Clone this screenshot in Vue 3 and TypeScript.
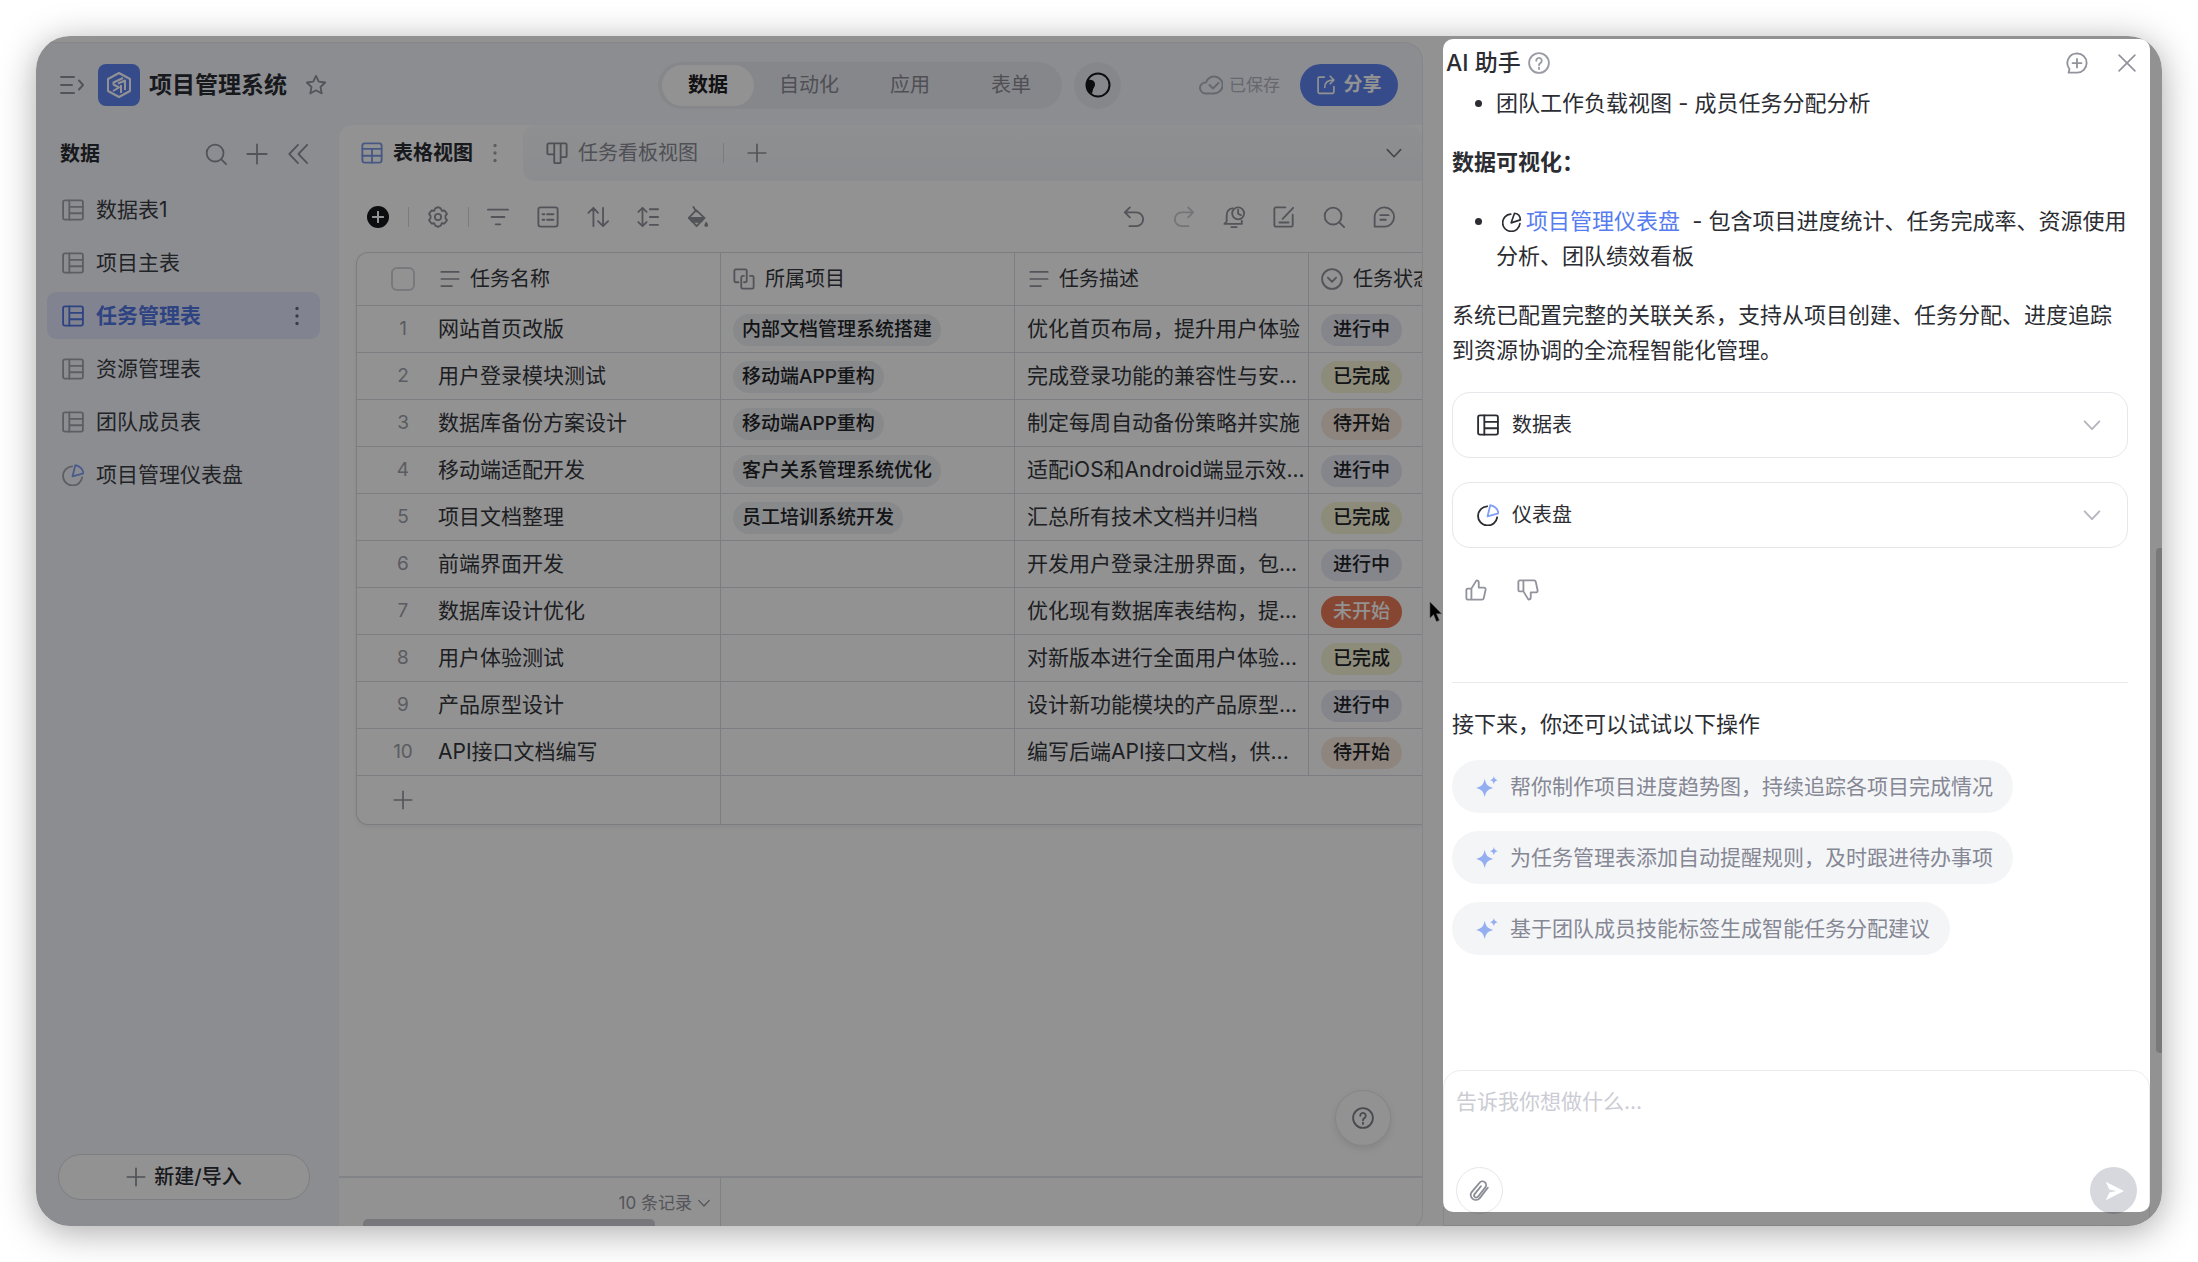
<script setup lang="ts">
import { h, type FunctionalComponent } from 'vue'

const shapes: Record<string, string> = {
  menu: '<path d="M1 4h13M1 12h11M1 20h13M19 7.500l4 4.500-4 4.500"/>',
  star: '<path d="M12 2l3 6.400 7 .9-5.100 4.900 1.300 7L12 17.800l-6.200 3.400 1.300-7L2 9.300l7-.9z"/>',
  search: '<circle cx="11" cy="11" r="9.200"/><path d="M17.800 17.800L23 23"/>',
  plus: '<path d="M12 1.500v21M1.500 12h21"/>',
  collapse: '<path d="M12 2L2.500 12l9.500 10M22 2l-9.500 10L22 22"/>',
  sheet: '<rect x="1.200" y="1.500" width="21.600" height="21" rx="2"/><path d="M8 1.500v21M8 8.500h14.800M8 15.500h14.800"/>',
  dashboard: '<path d="M11 2.500A10.500 10.500 0 1 0 22 14.500"/><path class="accent" d="M14.500 1.200l-3 12.300 11.800-3.400C23 5.500 19 2 14.500 1.200z"/>',
  pie: '<path d="M10.500 2.500A10.400 10.400 0 1 0 21.500 14"/><path d="M15 1.500L11 13l11-3.500C22 5 19 2 15 1.500z"/>',
  dots: '<g fill="currentColor" stroke="none"><circle cx="12" cy="3" r="2"/><circle cx="12" cy="12" r="2"/><circle cx="12" cy="21" r="2"/></g>',
  grid: '<rect x="1.500" y="1.500" width="21" height="21" rx="2.500"/><path d="M1.500 7.500h21M1.500 15h21M12 7.500v15"/>',
  board: '<path d="M3 1.500h18a1.500 1.500 0 0 1 1.500 1.500v12.500a1 1 0 0 1-1 1H16V22a1 1 0 0 1-1 1H10a1 1 0 0 1-1-1v-8.500H2.500a1 1 0 0 1-1-1V3A1.500 1.500 0 0 1 3 1.500zM9 1.500v12M16 1.500v15"/>',
  down: '<path d="M4 8l8 8.500L20 8"/>',
  gear: '<path d="M12 1.200l3 1.400 1.200 2.600 2.900-.3 2.700 3.700-1.700 2.200v2.400l1.700 2.200-2.700 3.700-2.900-.3-1.200 2.600-3 1.400-3-1.400-1.200-2.600-2.900.3-2.700-3.700 1.700-2.200v-2.400L2.200 8.600l2.700-3.700 2.900.3L9 2.600z"/><circle cx="12" cy="12" r="3.400"/>',
  filter: '<path d="M1 4h22M5 12h14M9.500 20h5"/>',
  fields: '<rect x="1.500" y="1.500" width="21" height="21" rx="2.500"/><path d="M6 9h2M11 9h7M6 15h2M11 15h7"/>',
  sort: '<path d="M7 22V2M1.500 7.500L7 2l5 5.500M17.500 2v20M12 16.500l5.500 5.500 5.500-5.500"/>',
  rowHeight: '<path d="M6 2v20M1.500 6.500L6 2l4.500 4.500M1.500 17.500L6 22l4.500-4.500M14 3.500h9M14 12h9M14 20.500h9"/>',
  fill: '<path d="M7 1l3 5M10 4.500L2 13l8.500 9 8.500-9z"/><path d="M2 13h17l-4 4.200H6z" fill="currentColor"/><path d="M21 17c1.500 2 2 3 2 4a2 2 0 0 1-4 0c0-1 .5-2 2-4z" fill="currentColor" stroke="none"/>',
  undo: '<path d="M7.500 1.500L2 7l5.500 5.500M2 7h12.500a7.500 7.500 0 0 1 0 15H7"/>',
  redo: '<path d="M16.500 1.500L22 7l-5.500 5.500M22 7H9.500a7.500 7.500 0 0 0 0 15H17"/>',
  remind: '<path d="M10.500 2.500C6 3 4 6.500 4 10.500V17l-2.500 2.500h19V16M9 23h6"/><circle cx="16.500" cy="8" r="6.500"/><path d="M16.500 4v4.500l3 1.500"/>',
  form: '<path d="M13.500 1.500H3A1.500 1.500 0 0 0 1.500 3v18A1.500 1.500 0 0 0 3 22.500h17a1.500 1.500 0 0 0 1.500-1.500V9.500M22 2L10.500 14M7 18h10"/>',
  comment: '<path d="M12.500 1.500a10.300 10.300 0 1 1 0 21H1.800V12A10.500 10.500 0 0 1 12.500 1.500zM8 10h9M8 15h6"/>',
  text: '<path d="M1.500 3.500h21M1.500 12h21M1.500 20.500h13"/>',
  link: '<path d="M6 15.500H3A1.500 1.500 0 0 1 1.500 14V3A1.500 1.500 0 0 1 3 1.500h10.500A1.500 1.500 0 0 1 15 3v10.500a2 2 0 0 1-2 2h-1"/><path d="M18.500 8.500H21a1.500 1.500 0 0 1 1.500 1.500v11a1.500 1.500 0 0 1-1.500 1.500H10.500A1.500 1.500 0 0 1 9 21V10.500a2 2 0 0 1 2-2h1"/>',
  select: '<circle cx="12" cy="12" r="10.800"/><path d="M7.500 10.500l4.500 4.500 4.500-4.500"/>',
  cloud: '<path d="M6.500 20.500a5.500 5.500 0 0 1 0-11h.5a8.500 8.500 0 1 1 8 11zM10.500 12l3.500 3.500 5.500-5.500"/>',
  share: '<path d="M10 2.500H4A1.500 1.500 0 0 0 2.500 4v16.500A1.500 1.500 0 0 0 4 22h16a1.500 1.500 0 0 0 1.500-1.500V14M10.500 15c0-6 4-9 10.500-9M17 1.500L21.500 6 17 10.500"/>',
  help: '<circle cx="12" cy="12" r="10.800"/><path d="M9 9.500a3 3 0 1 1 4.500 2.600c-1 .6-1.500 1.200-1.500 2.400M12 17v1.600"/>',
  newChat: '<path d="M12 1.500a10.300 10.300 0 1 1 0 21H2.800l1-4A10.500 10.500 0 0 1 12 1.500zM12 7.500v9.500M7.200 12.200h9.600"/>',
  close: '<path d="M2.500 2.500l19 19M21.500 2.500l-19 19"/>',
  like: '<path d="M7 10.500H3A1.500 1.500 0 0 0 1.500 12v9A1.500 1.500 0 0 0 3 22.500h15.500a2 2 0 0 0 2-1.600l2-9.500a1.800 1.800 0 0 0-1.800-2H15V4c0-1.500-1-2.500-2.500-2.500L7 10.500zM7 10.500v12"/>',
  dislike: '<path d="M7 13.500H3A1.500 1.500 0 0 1 1.500 12V3A1.500 1.500 0 0 1 3 1.500h15.500a2 2 0 0 1 2 1.600l2 9.500a1.800 1.800 0 0 1-1.800 2H15V20c0 1.500-1 2.500-2.500 2.500L7 13.500zM7 13.500v-12"/>',
  spark: '<g fill="currentColor" stroke="none"><path d="M9.500 3c1.500 6.500 2.800 8 9.200 10-6.400 2-7.700 3.500-9.200 10C8 16.500 6.500 15 .3 13 6.500 11 8 9.500 9.500 3z"/><path d="M19.500 0c.7 3 1.400 3.700 4.200 4.500-2.800.8-3.500 1.500-4.200 4.500-.7-3-1.400-3.700-4.200-4.500 2.800-.8 3.500-1.500 4.200-4.500z"/></g>',
  clip: '<path d="M20.500 8.500l-9 11.500a5.500 5.500 0 0 1-8.600-6.800L11.500 3a4 4 0 0 1 6.300 5L9.500 18.500a2.300 2.300 0 0 1-3.600-2.800L13 6.800"/>',
  send: '<path fill="currentColor" stroke="none" d="M2 1l22 11L2 23l4.500-9.300L15 12 6.500 10.300z"/>',
}

const Icon: FunctionalComponent<{ name: string; size?: number }> = (props) =>
  h('svg', {
    class: 'icon',
    viewBox: '0 0 24 24',
    width: props.size ?? 22,
    height: props.size ?? 22,
    'aria-hidden': 'true',
    innerHTML: shapes[props.name],
  })
Icon.props = ['name', 'size']

const sheets = [
  { name: '数据表1', icon: 'sheet' },
  { name: '项目主表', icon: 'sheet' },
  { name: '任务管理表', icon: 'sheet', active: true },
  { name: '资源管理表', icon: 'sheet' },
  { name: '团队成员表', icon: 'sheet' },
  { name: '项目管理仪表盘', icon: 'dashboard' },
]
const sections = ['数据', '自动化', '应用', '表单']

type Status = '进行中' | '已完成' | '待开始' | '未开始'
const statusClass: Record<Status, string> = {
  进行中: 'doing',
  已完成: 'done',
  待开始: 'waiting',
  未开始: 'idle',
}
const tasks: { name: string; project?: string; desc: string; status: Status }[] = [
  { name: '网站首页改版', project: '内部文档管理系统搭建', desc: '优化首页布局，提升用户体验', status: '进行中' },
  { name: '用户登录模块测试', project: '移动端APP重构', desc: '完成登录功能的兼容性与安...', status: '已完成' },
  { name: '数据库备份方案设计', project: '移动端APP重构', desc: '制定每周自动备份策略并实施', status: '待开始' },
  { name: '移动端适配开发', project: '客户关系管理系统优化', desc: '适配iOS和Android端显示效...', status: '进行中' },
  { name: '项目文档整理', project: '员工培训系统开发', desc: '汇总所有技术文档并归档', status: '已完成' },
  { name: '前端界面开发', desc: '开发用户登录注册界面，包...', status: '进行中' },
  { name: '数据库设计优化', desc: '优化现有数据库表结构，提...', status: '未开始' },
  { name: '用户体验测试', desc: '对新版本进行全面用户体验...', status: '已完成' },
  { name: '产品原型设计', desc: '设计新功能模块的产品原型...', status: '进行中' },
  { name: 'API接口文档编写', desc: '编写后端API接口文档，供...', status: '待开始' },
]
const leftTools = [
  { icon: 'filter', label: '筛选' },
  { icon: 'fields', label: '字段' },
  { icon: 'sort', label: '排序' },
  { icon: 'rowHeight', label: '行高' },
  { icon: 'fill', label: '填色' },
]
const rightTools = [
  { icon: 'undo', label: '撤销' },
  { icon: 'redo', label: '重做' },
  { icon: 'remind', label: '提醒' },
  { icon: 'form', label: '表单' },
  { icon: 'search', label: '搜索' },
  { icon: 'comment', label: '评论' },
]
const suggestions = [
  '帮你制作项目进度趋势图，持续追踪各项目完成情况',
  '为任务管理表添加自动提醒规则，及时跟进待办事项',
  '基于团队成员技能标签生成智能任务分配建议',
]
</script>

<template>
  <div class="page">
    <div class="window">
      <div class="app">
        <header class="topbar">
          <button class="plain" aria-label="菜单"><Icon name="menu" :size="24" /></button>
          <span class="logo">
            <svg viewBox="0 0 24 26" width="24" height="26" aria-hidden="true">
              <path d="M12 1l11 6v12l-11 6-11-6V7z" />
              <path d="M16 6l-9.500 4.500v2l5.500 3-6 3.500M11 11.500l7-3V18M14 13v8" />
            </svg>
          </span>
          <h1>项目管理系统</h1>
          <button class="plain star" aria-label="收藏"><Icon name="star" /></button>
          <nav class="sections">
            <button v-for="(s, i) in sections" :key="s" :class="{ on: i === 0 }">{{ s }}</button>
          </nav>
          <button class="round" aria-label="智能助手">
            <svg viewBox="0 0 26 26" width="26" height="26" aria-hidden="true">
              <circle cx="13" cy="13" r="11.500" fill="none" stroke="#16171a" stroke-width="2" />
              <path d="M3 8c3-1 6.500 0 7 3.500.4 3-1.500 4-2 6-.4 1.500-.3 3-1.500 4C2 18.500.5 12 3 8z" fill="#16171a" />
            </svg>
          </button>
          <span class="saved"><Icon name="cloud" :size="24" />已保存</span>
          <button class="share"><Icon name="share" :size="20" />分享</button>
        </header>

        <div class="columns">
          <aside class="sidebar">
            <div class="side-head">
              <h2>数据</h2>
              <button class="plain" aria-label="搜索"><Icon name="search" /></button>
              <button class="plain" aria-label="新建"><Icon name="plus" /></button>
              <button class="plain" aria-label="收起"><Icon name="collapse" /></button>
            </div>
            <ul class="sheets">
              <li v-for="s in sheets" :key="s.name">
                <a href="#" :class="{ active: s.active }">
                  <Icon :name="s.icon" /><span>{{ s.name }}</span>
                  <Icon v-if="s.active" name="dots" :size="20" class="more" />
                </a>
              </li>
            </ul>
            <button class="create"><Icon name="plus" :size="20" />新建/导入</button>
          </aside>

          <main class="main">
            <div class="views">
              <button class="view current"><Icon name="grid" />表格视图<Icon name="dots" :size="20" class="more" /></button>
              <div class="view-rest">
                <button class="view"><Icon name="board" />任务看板视图</button>
                <i class="bar"></i>
                <button class="plain" aria-label="新增视图"><Icon name="plus" :size="20" /></button>
                <button class="plain last" aria-label="全部视图"><Icon name="down" :size="20" /></button>
              </div>
            </div>

            <div class="tools">
              <button class="plain add" aria-label="新增记录"><Icon name="plus" :size="12" /></button>
              <i class="bar"></i>
              <button class="plain" aria-label="设置"><Icon name="gear" /></button>
              <i class="bar"></i>
              <button v-for="t in leftTools" :key="t.icon" class="plain gap" :aria-label="t.label"><Icon :name="t.icon" /></button>
              <span class="spacer"></span>
              <button v-for="t in rightTools" :key="t.icon" class="plain gap" :class="t.icon" :aria-label="t.label"><Icon :name="t.icon" /></button>
            </div>

            <div class="table-wrap">
              <table>
                <colgroup>
                  <col class="c-index" /><col class="c-name" /><col class="c-wide" /><col class="c-wide" /><col />
                </colgroup>
                <thead>
                  <tr>
                    <th class="index"><input type="checkbox" aria-label="全选" /></th>
                    <th class="name"><span class="th"><Icon name="text" :size="20" class="wide" />任务名称</span></th>
                    <th><span class="th"><Icon name="link" />所属项目</span></th>
                    <th><span class="th"><Icon name="text" :size="20" class="wide" />任务描述</span></th>
                    <th><span class="th"><Icon name="select" />任务状态</span></th>
                  </tr>
                </thead>
                <tbody>
                  <tr v-for="(t, i) in tasks" :key="t.name">
                    <td class="index">{{ i + 1 }}</td>
                    <td class="name">{{ t.name }}</td>
                    <td><span v-if="t.project" class="tag">{{ t.project }}</span></td>
                    <td>{{ t.desc }}</td>
                    <td><span class="tag status" :class="statusClass[t.status]">{{ t.status }}</span></td>
                  </tr>
                  <tr class="append">
                    <td class="index"><button class="plain" aria-label="新增一行"><Icon name="plus" :size="20" /></button></td>
                    <td class="name"></td>
                    <td class="open"></td>
                    <td class="open"></td>
                    <td></td>
                  </tr>
                </tbody>
              </table>
            </div>

            <footer class="foot">
              <button class="count">10 条记录<Icon name="down" :size="16" /></button>
              <i class="thumb"></i>
            </footer>
            <button class="help" aria-label="帮助"><Icon name="help" /></button>
          </main>
        </div>
      </div>

      <section class="assistant">
        <header class="a-head">
          <h2>AI 助手</h2>
          <Icon name="help" />
          <span class="spacer"></span>
          <button class="plain" aria-label="新对话"><Icon name="newChat" /></button>
          <button class="plain" aria-label="关闭"><Icon name="close" :size="20" /></button>
        </header>

        <div class="a-body">
          <ul>
            <li>团队工作负载视图 - 成员任务分配分析</li>
          </ul>
          <h3>数据可视化：</h3>
          <ul>
            <li><Icon name="pie" :size="20" class="inline" /><a href="#">项目管理仪表盘</a> - 包含项目进度统计、任务完成率、资源使用分析、团队绩效看板</li>
          </ul>
          <p>系统已配置完整的关联关系，支持从项目创建、任务分配、进度追踪到资源协调的全流程智能化管理。</p>
          <button class="fold"><Icon name="sheet" />数据表<Icon name="down" class="end" /></button>
          <button class="fold"><Icon name="dashboard" />仪表盘<Icon name="down" class="end" /></button>
          <div class="votes">
            <button class="plain" aria-label="赞"><Icon name="like" /></button>
            <button class="plain" aria-label="踩"><Icon name="dislike" /></button>
          </div>
          <div class="next">
            <p>接下来，你还可以试试以下操作</p>
            <button v-for="s in suggestions" :key="s" class="chip"><Icon name="spark" />{{ s }}</button>
          </div>
        </div>

        <form class="composer" @submit.prevent>
          <textarea aria-label="输入内容" placeholder="告诉我你想做什么..."></textarea>
          <div class="actions">
            <button type="button" class="attach" aria-label="附件"><Icon name="clip" /></button>
            <button class="send" aria-label="发送"><Icon name="send" :size="20" /></button>
          </div>
        </form>
        <i class="a-scroll"></i>
        <i class="spotlight"></i>
        <svg class="cursor" viewBox="0 0 14 22" width="14" height="22" aria-hidden="true">
          <path d="M1 1v16l3.600-3.400L7.500 20.500l2.800-1.200-2.900-6.600H12.500z" fill="#000" stroke="#555" stroke-width=".6" />
        </svg>
      </section>
    </div>
  </div>
</template>

<style>
body {
  margin: 0;
  background: #fff;
}
</style>

<style scoped>
* {
  box-sizing: border-box;
}
.page {
  height: 100vh;
  padding: 36px;
  font: 21px/32px Inter, 'Noto Sans CJK SC', sans-serif;
  color: #2b2d33;
}
button,
textarea {
  font: inherit;
  color: inherit;
  border: 0;
  background: none;
  padding: 0;
  margin: 0;
}
h1,
h2,
h3,
p,
ul {
  margin: 0;
  padding: 0;
}
.window {
  position: relative;
  display: flex;
  gap: 19px;
  height: 100%;
  overflow: hidden;
  border-radius: 34px;
  background: #fff;
}
.page::before {
  content: '';
  position: absolute;
  inset: 36px;
  border-radius: 34px;
  box-shadow: 0 6px 36px rgba(0, 0, 0, 0.34);
}
.icon {
  flex: none;
  display: block;
  fill: none;
  stroke: currentColor;
  stroke-width: 2;
  stroke-linecap: round;
  stroke-linejoin: round;
}
.icon :deep(.accent) {
  stroke: #7f9ef5;
}
.plain {
  display: flex;
  align-items: center;
  justify-content: center;
  color: #92939d;
}
.spacer {
  flex: 1;
}
.bar {
  width: 1px;
  height: 20px;
  background: #d8d9de;
}

/* workspace */
.app {
  flex: 1;
  min-width: 0;
  display: flex;
  flex-direction: column;
  margin: 7px 0 -4px;
  border-radius: 0 18px 18px 0;
  overflow: hidden;
  background: #f5f7fe;
  box-shadow: 0 0 0 1px #e8eaf0;
}
.topbar {
  display: flex;
  align-items: center;
  height: 82px;
  flex: none;
  padding: 2px 24px 0;
}
.logo {
  display: flex;
  align-items: center;
  justify-content: center;
  width: 42px;
  height: 42px;
  margin: 0 9px 0 14px;
  border-radius: 8px;
  background: #5f84f2;
}
.logo svg {
  fill: none;
  stroke: #fff;
  stroke-width: 2;
  stroke-linejoin: round;
}
h1 {
  font-size: 23px;
  font-weight: 600;
}
.star {
  margin-left: 18px;
}
.sections {
  display: flex;
  align-items: center;
  height: 47px;
  margin-left: auto;
  border-radius: 24px;
  background: #ebecf1;
}
.sections button {
  width: 92px;
  height: 41px;
  margin: 0 5px 0 4px;
  border-radius: 21px;
  font-size: 20px;
  color: #8a8b95;
}
.sections .on {
  background: #fff;
  color: #1f2024;
  font-weight: 600;
}
.round {
  display: flex;
  align-items: center;
  justify-content: center;
  width: 47px;
  height: 47px;
  margin-left: 12px;
  border-radius: 50%;
  background: #ebecf1;
}
.saved {
  display: flex;
  align-items: center;
  gap: 6px;
  margin: 0 20px 0 78px;
  font-size: 17px;
  color: #b4b5be;
}
.share {
  display: flex;
  align-items: center;
  justify-content: center;
  gap: 7px;
  width: 98px;
  height: 42px;
  border-radius: 21px;
  background: #5f84f2;
  color: #fff;
  font-size: 19px;
  font-weight: 600;
}
.columns {
  flex: 1;
  min-height: 0;
  display: flex;
}
.sidebar {
  flex: none;
  width: 303px;
  display: flex;
  flex-direction: column;
  padding: 0 19px 30px 11px;
}
.side-head {
  display: flex;
  align-items: center;
  gap: 19px;
  height: 58px;
  padding: 0 11px 0 13px;
}
.side-head h2 {
  flex: 1;
  font-size: 20px;
  font-weight: 600;
}
.sheets {
  flex: 1;
  list-style: none;
  padding-top: 3px;
}
.sheets a {
  display: flex;
  align-items: center;
  gap: 12px;
  height: 47px;
  margin-bottom: 6px;
  padding: 0 13px 0 15px;
  border-radius: 9px;
  color: #3c3e45;
  text-decoration: none;
}
.sheets .icon {
  color: #a3a4ad;
}
.sheets .more {
  margin-left: auto;
  color: #666872;
}
.sheets .active {
  background: #e1e6fb;
  color: #5175e4;
  font-weight: 600;
}
.sheets .active .icon:first-child {
  color: #5175e4;
}
.create {
  display: flex;
  align-items: center;
  justify-content: center;
  gap: 8px;
  height: 46px;
  margin: 0 10px 0 11px;
  border: 1px solid #d9dae2;
  border-radius: 23px;
  background: #fff;
  font-size: 20px;
  font-weight: 500;
}
.create .icon {
  color: #8b8c96;
}
.main {
  position: relative;
  flex: 1;
  min-width: 0;
  display: flex;
  flex-direction: column;
  border-radius: 14px 0 0;
  background: #fff;
}
.views {
  display: flex;
  height: 56px;
  flex: none;
}
.view {
  display: flex;
  align-items: center;
  gap: 10px;
  font-size: 20px;
  color: #8a8b95;
}
.current {
  width: 184px;
  padding-left: 22px;
  color: #2b2d33;
  font-weight: 600;
}
.current .icon {
  color: #7f9ae8;
}
.current .more {
  margin-left: 2px;
  color: #a3a4ad;
}
.view-rest {
  flex: 1;
  display: flex;
  align-items: center;
  padding: 0 18px 0 23px;
  border-radius: 12px 12px 0 12px;
  background: linear-gradient(#fafbfd, #f3f5fa);
}
.view-rest .bar {
  margin: 0 23px 0 25px;
}
.view-rest .last {
  margin-left: auto;
  color: #7a7b85;
}
.tools {
  display: flex;
  align-items: center;
  height: 71px;
  flex: none;
  padding: 0 27px 0 0;
}
.tools .add {
  width: 22px;
  height: 22px;
  margin-left: 28px;
  border-radius: 50%;
  background: #16171a;
  color: #fff;
}
.add .icon {
  stroke-width: 4;
}
.tools .bar {
  margin: 0 18px 0 19px;
}
.tools .gap + .gap {
  margin-left: 28px;
}
.tools .redo {
  color: #cccdd2;
}

.table-wrap {
  flex: none;
  margin-left: 17px;
  overflow: hidden;
  border: 1px solid #d9dae0;
  border-width: 1px 0 1px 1px;
  border-radius: 12px 0 0 12px;
  box-shadow: 0 2px 4px rgba(0, 0, 0, 0.06);
}
table {
  width: 100%;
  table-layout: fixed;
  border-collapse: separate;
  border-spacing: 0;
}
.c-index {
  width: 68px;
}
.c-name {
  width: 296px;
}
.c-wide {
  width: 294px;
}
th,
td {
  height: 47px;
  padding: 0 12px;
  border: 1px solid #d9dae0;
  border-width: 0 1px 1px 0;
  white-space: nowrap;
  overflow: hidden;
  text-align: left;
  font-weight: 400;
  color: #34363c;
}
th:last-child,
td:last-child {
  border-right: 0;
  padding-right: 0;
}
th {
  height: 53px;
}
th,
.th {
  font-size: 20px;
}
.index {
  border-right: 0;
  padding: 0 0 0 24px;
  text-align: center;
  font-size: 19px;
  color: #a0a1aa;
}
.index .plain {
  width: 100%;
}
.name {
  padding-left: 13px;
}
.th {
  display: flex;
  align-items: center;
  gap: 10px;
}
.th .icon {
  color: #92939d;
}
.th .wide {
  margin-left: 2px;
}
input[type='checkbox'] {
  appearance: none;
  display: block;
  width: 24px;
  height: 24px;
  margin: 0 auto;
  border: 2px solid #d3d4db;
  border-radius: 6px;
}
.tag {
  display: inline-block;
  vertical-align: middle;
  padding: 0 9px;
  border-radius: 16px;
  background: #eeeff3;
  font-size: 19px;
  font-weight: 500;
  line-height: 32px;
  color: #222328;
}
.status {
  padding: 0 12px;
}
.doing {
  background: #e8e9f5;
}
.done {
  background: #f6f3d3;
}
.waiting {
  background: #f8eadc;
}
.idle {
  background: #ea7a56;
  color: #fff;
}
.append td {
  height: 48px;
  border-bottom: 0;
}
.append .open {
  border-right: 0;
}
.foot {
  position: relative;
  display: flex;
  height: 54px;
  margin-top: auto;
  border-top: 2px solid #e4e5ea;
}
.count {
  display: flex;
  align-items: center;
  justify-content: flex-end;
  gap: 4px;
  width: 382px;
  padding: 0 8px 2px 0;
  border-right: 1px solid #e0e1e6;
  font-size: 17px;
  color: #9495a0;
}
.thumb {
  position: absolute;
  left: 24px;
  bottom: 0;
  width: 292px;
  height: 11px;
  border-radius: 5px 5px 0 0;
  background: #d2d0d8;
}
.help {
  position: absolute;
  right: 32px;
  bottom: 85px;
  display: flex;
  align-items: center;
  justify-content: center;
  width: 54px;
  height: 54px;
  border-radius: 50%;
  background: #fff;
  color: #82838e;
  box-shadow: 0 0 0 1px #e9eaee, 0 3px 8px rgba(0, 0, 0, 0.12);
}

/* assistant */
.assistant {
  position: relative;
  flex: none;
  width: 721px;
  display: flex;
  flex-direction: column;
  padding: 0 12px 0 2px;
  background: #fff;
  font-size: 22px;
}
.a-head {
  display: flex;
  align-items: center;
  gap: 7px;
  height: 48px;
  padding: 6px 13px 0 3px;
  color: #9b9ca5;
}
.a-head h2 {
  font-size: 23px;
  font-weight: 500;
}
.a-head h2 {
  color: #2b2d33;
}
.a-head .plain + .plain {
  margin-left: 22px;
}
.a-body {
  flex: 1;
  min-height: 0;
  overflow: hidden;
  padding: 2px 22px 0 9px;
  line-height: 35px;
}
.a-body ul {
  padding-left: 44px;
}
.a-body h3 {
  margin: 24px 0;
  font-size: 22px;
  font-weight: 600;
}
.a-body p {
  margin: 24px 0;
}
.a-body a {
  margin-right: 6px;
  color: #567cf0;
  text-decoration: none;
}
.inline {
  display: inline-block;
  margin: 0 4px 0 6px;
  vertical-align: -3px;
}
.fold {
  display: flex;
  align-items: center;
  gap: 13px;
  width: 100%;
  height: 66px;
  margin-bottom: 24px;
  padding: 0 24px;
  border: 1px solid #e6e7ea;
  border-radius: 18px;
  font-size: 20px;
}
.fold .end {
  margin-left: auto;
  color: #b4b5be;
}
.votes {
  display: flex;
  gap: 30px;
  padding: 7px 13px 0;
}
.next {
  display: flex;
  flex-direction: column;
  align-items: flex-start;
  gap: 18px;
  margin-top: 81px;
  padding-top: 24px;
  border-top: 1px solid #e9eaed;
}
.next p {
  margin: 0;
}
.chip {
  display: flex;
  align-items: center;
  gap: 12px;
  height: 53px;
  padding: 0 20px 0 24px;
  border-radius: 27px;
  background: #f4f5f7;
  font-size: 21px;
  color: #858794;
}
.chip .icon {
  color: #94aef2;
}
.composer {
  display: flex;
  flex-direction: column;
  height: 156px;
  border: 1px solid #ececef;
  border-radius: 18px 18px 0 0;
  font-size: 21px;
}
textarea {
  flex: 1;
  min-height: 0;
  padding: 15px 12px;
  resize: none;
  outline: 0;
}
textarea::placeholder {
  color: #cbccd4;
}
.actions {
  display: flex;
  justify-content: space-between;
  padding: 0 12px 11px;
}
.attach,
.send {
  display: flex;
  align-items: center;
  justify-content: center;
  width: 47px;
  height: 47px;
  border-radius: 50%;
}
.attach {
  border: 1px solid #e6e7ea;
  color: #8b8c96;
}
.send {
  background: #d6d8de;
  color: #fff;
}
.a-scroll {
  position: absolute;
  right: 0;
  top: 512px;
  bottom: 173px;
  width: 6px;
  border-radius: 4px 0 0 4px;
  background: #d3d3d3;
}
.spotlight {
  position: absolute;
  inset: 3px 12px 14px 2px;
  border-radius: 10px;
  box-shadow: 0 0 0 3000px rgba(0, 0, 0, 0.427);
  pointer-events: none;
}
.cursor {
  position: absolute;
  left: -12px;
  top: 565px;
}
</style>
